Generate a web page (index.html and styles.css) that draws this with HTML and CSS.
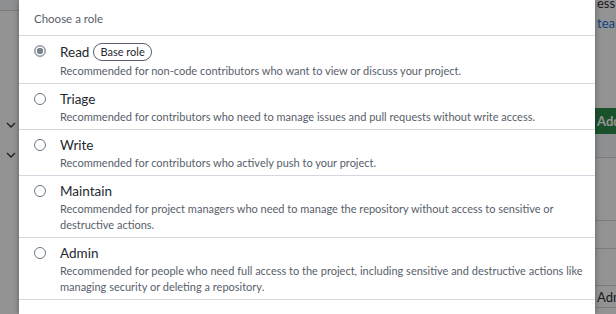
FILE: index.html
```html
<!DOCTYPE html>
<html lang="en">
<head>
<meta charset="utf-8">
<title>Choose a role</title>
<link rel="stylesheet" href="styles.css">
</head>
<body>
<div class="page">
  <div class="side-left">
    <div class="band"></div>
    <div class="chev chev-1"><svg width="10" height="6" viewBox="0 0 10 6"><path d="M1 1l4 4 4-4" fill="none" stroke="#24292f" stroke-width="1.3"/></svg></div>
    <div class="chev"><svg width="10" height="6" viewBox="0 0 10 6"><path d="M1 1l4 4 4-4" fill="none" stroke="#24292f" stroke-width="1.3"/></svg></div>
  </div>
  <div class="side-right">
    <div class="r-text">ess t</div>
    <div class="r-link">tear</div>
    <div class="r-btn">Add p</div>
    <div class="r-row r-row-1"></div>
    <div class="r-row r-row-2"></div>
    <div class="r-row r-row-3"></div>
    <div class="r-row r-row-4"></div>
    <div class="r-row r-row-5">Adm</div>
  </div>
  <div class="overlay"></div>
  <div class="modal">
    <div class="header">Choose a role</div>
    <ul class="roles">
      <li class="role role-first">
        <span class="radio checked"></span>
        <div class="role-body">
          <div class="role-title">Read <span class="pill">Base role</span></div>
          <div class="role-desc">Recommended for non-code contributors who want to view or discuss your project.</div>
        </div>
      </li>
      <li class="role">
        <span class="radio"></span>
        <div class="role-body">
          <div class="role-title">Triage</div>
          <div class="role-desc">Recommended for contributors who need to manage issues and pull requests without write access.</div>
        </div>
      </li>
      <li class="role">
        <span class="radio"></span>
        <div class="role-body">
          <div class="role-title">Write</div>
          <div class="role-desc">Recommended for contributors who actively push to your project.</div>
        </div>
      </li>
      <li class="role">
        <span class="radio"></span>
        <div class="role-body">
          <div class="role-title">Maintain</div>
          <div class="role-desc">Recommended for project managers who need to manage the repository without access to sensitive or destructive actions.</div>
        </div>
      </li>
      <li class="role">
        <span class="radio"></span>
        <div class="role-body">
          <div class="role-title">Admin</div>
          <div class="role-desc">Recommended for people who need full access to the project, including sensitive and destructive actions like managing security or deleting a repository.</div>
        </div>
      </li>
    </ul>
  </div>
</div>
</body>
</html>
```
FILE: styles.css
```css
* { box-sizing: border-box; }
html, body { margin: 0; padding: 0; }
body {
  width: 616px;
  height: 314px;
  overflow: hidden;
  font-family: Lato, "Liberation Sans", sans-serif;
  color: #24292f;
}
.page {
  position: relative;
  width: 616px;
  height: 314px;
  background: #ffffff;
  display: flex;
  justify-content: space-between;
  overflow: hidden;
}
.side-left {
  width: 19px;
  display: flex;
  flex-direction: column;
  align-items: center;
}
.band {
  align-self: stretch;
  height: 11px;
  border-bottom: 1px solid #d0d7de;
  background: #f6f8fa;
}
.chev { height: 6px; display: flex; margin-left: 3px; }
.chev-1 { margin-top: 111px; margin-bottom: 24px; }
.side-right {
  width: 21px;
  display: flex;
  flex-direction: column;
  padding-left: 2px;
  font-size: 13px;
  white-space: nowrap;
  overflow: hidden;
}
.r-text { margin-top: -7px; line-height: 20px; color: #1f2328; }
.r-link { line-height: 20px; margin-top: 0; color: #0969da; }
.r-btn {
  margin-top: 75px;
  margin-left: -2px;
  height: 26px;
  line-height: 26px;
  background: #1f883d;
  color: #ffffff;
  padding-left: 2px;
  font-weight: 700;
}
.r-row { border-bottom: 1px solid #d0d7de; margin-left: -2px; }
.r-row-1 { height: 24px; background: #f6f8fa; }
.r-row-2 { height: 63px; }
.r-row-3 { height: 28px; }
.r-row-4 { height: 37px; }
.r-row-5 { height: 22px; line-height: 22px; padding-left: 2px; color: #1f2328; }
.overlay {
  position: absolute;
  inset: 0;
  background: rgba(20, 20, 20, 0.46);
}
.modal {
  position: absolute;
  left: 19px;
  top: 0;
  width: 576px;
  height: 314px;
  background: #ffffff;
  box-shadow: 0 0 6px rgba(0, 0, 0, 0.35);
}
.header {
  height: 35px;
  padding-left: 15px;
  display: flex;
  align-items: center;
  font-size: 11.5px;
  color: #57606a;
  padding-top: 2px;
}
.roles {
  list-style: none;
  margin: 0;
  padding: 0;
  border-top: 1px solid #d0d7de;
}
.role {
  display: flex;
  align-items: flex-start;
  gap: 14px;
  padding: 5px 4px 4px 15px;
  border-bottom: 1px solid #d0d7de;
}
.radio {
  flex: none;
  width: 12px;
  height: 12px;
  margin-top: 4px;
  border: 1px solid #6e7781;
  border-radius: 50%;
  background: #ffffff;
}
.radio.checked {
  border-color: #8c959f;
  background: radial-gradient(circle, #7d848c 0 3px, #ffffff 3.5px 4px, #b6bcc3 4.5px);
}
.role-body { flex: 1; min-width: 0; }
.role-title {
  font-size: 13.5px;
  line-height: 20px;
  color: #24292f;
  display: flex;
  align-items: center;
  gap: 4px;
}
.role-first .role-title { line-height: 22px; }
.pill {
  font-size: 11px;
  line-height: 16px;
  padding: 0 6px;
  border: 1px solid #57606a;
  border-radius: 2em;
  color: #24292f;
}
.role-desc {
  font-size: 11px;
  line-height: 16px;
  color: #57606a;
  max-width: 528px;
}
```
